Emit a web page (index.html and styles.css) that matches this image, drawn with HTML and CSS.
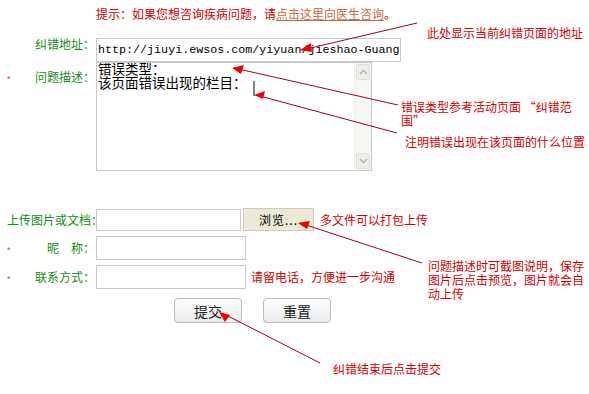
FILE: index.html
```html
<!DOCTYPE html>
<html lang="zh-CN">
<head>
<meta charset="utf-8">
<title>纠错</title>
<link rel="stylesheet" href="styles.css">
</head>
<body>
<div class="page">
  <p class="hint">提示：如果您想咨询疾病问题，请<a href="#" class="hint-link">点击这里向医生咨询</a>。</p>

  <form class="form">
    <div class="row row-url">
      <div class="label label-top1"><span class="star"></span><span class="label-text">纠错地址：</span></div>
      <input class="field field-url" type="text" value="http://jiuyi.ewsos.com/yiyuan/jieshao-Guang">
    </div>

    <div class="row row-desc">
      <div class="label label-top2"><span class="star">*</span><span class="label-text">问题描述：</span></div>
      <div class="textarea-box">
        <textarea class="textarea">错误类型：
该页面错误出现的栏目：</textarea>
        <div class="scrollbar">
          <div class="sb-btn"><svg width="9" height="6" viewBox="0 0 9 6"><path d="M1 5 L4.5 1.5 L8 5" fill="none" stroke="#b9b9b4" stroke-width="1.6"/></svg></div>
          <div class="sb-track"></div>
          <div class="sb-btn"><svg width="9" height="6" viewBox="0 0 9 6"><path d="M1 1 L4.5 4.5 L8 1" fill="none" stroke="#b9b9b4" stroke-width="1.6"/></svg></div>
        </div>
      </div>
    </div>

    <div class="row row-upload">
      <div class="label"><span class="star"></span><span class="label-text">上传图片或文档：</span></div>
      <input class="field field-file" type="text" value="">
      <button type="button" class="browse">浏览...</button>
      <span class="note note-upload">多文件可以打包上传</span>
    </div>

    <div class="row row-nick">
      <div class="label"><span class="star">*</span><span class="label-text">昵&emsp;称：</span></div>
      <input class="field field-short" type="text" value="">
    </div>

    <div class="row row-contact">
      <div class="label"><span class="star">*</span><span class="label-text">联系方式：</span></div>
      <input class="field field-short" type="text" value="">
      <span class="note note-contact">请留电话，方便进一步沟通</span>
    </div>

    <div class="actions">
      <button type="button" class="btn">提交</button>
      <button type="button" class="btn">重置</button>
    </div>
  </form>

  <svg class="overlay" width="589" height="394" viewBox="0 0 589 394">
    <line x1="254" y1="81" x2="254" y2="96" stroke="#000" stroke-width="1"/>
    <g stroke="#a3001e" stroke-width="1">
      <line x1="417" y1="23" x2="302" y2="50"/>
      <line x1="398" y1="105" x2="234" y2="68"/>
      <line x1="397" y1="133" x2="256" y2="95"/>
      <line x1="422" y1="263" x2="300" y2="223"/>
      <line x1="320" y1="363" x2="222" y2="313"/>
    </g>
    <g fill="#f00000">
      <polygon points="300,50 311,43 312,52"/>
      <polygon points="232,68 244,65 241,74"/>
      <polygon points="254,95 265,91 263,99"/>
      <polygon points="298,223 310,221 307,229"/>
      <polygon points="219,312 230,315 225,322"/>
    </g>
  </svg>

  <div class="ann ann-1">此处显示当前纠错页面的地址</div>
  <div class="ann ann-2">错误类型参考活动页面 “纠错范<br>围”</div>
  <div class="ann ann-3">注明错误出现在该页面的什么位置</div>
  <div class="ann ann-4">问题描述时可截图说明，保存<br>图片后点击预览，图片就会自<br>动上传</div>
  <div class="ann ann-5">纠错结束后点击提交</div>
</div>
</body>
</html>
```
FILE: styles.css
```css
* { box-sizing: border-box; }
html, body { margin: 0; padding: 0; background: #fff; }
body {
  font-family: "Noto Sans CJK SC", "DejaVu Sans", sans-serif;
  font-size: 12px;
  line-height: 12px;
  color: #000;
}
.page {
  position: relative;
  width: 589px;
  height: 394px;
  overflow: hidden;
}
.hint {
  margin: 0;
  padding: 8px 0 0 96px;
  line-height: 12px;
  color: #d40000;
}
.hint-link { color: #c86a40; text-decoration: underline; }

.form { margin-top: 18px; display: flex; flex-direction: column; }
.row { display: flex; align-items: center; }
.label {
  width: 96px;
  flex: none;
  display: flex;
  justify-content: space-between;
  align-items: center;
  color: #178a17;
  line-height: 12px;
}
.label-top1 { align-self: flex-start; padding-top: 0; }
.label-top2 { align-self: flex-start; padding-top: 9px; }
.star {
  width: 12px;
  padding-left: 7px;
  color: #d04a6e;
  font-family: "Liberation Sans", sans-serif;
  font-size: 9px;
  line-height: 12px;
  position: relative;
  top: 2px;
}
.label-text { white-space: nowrap; padding-right: 1px; }

.field {
  border: 1px solid #c9c9c9;
  background: #fff;
  margin: 0;
  padding: 0 2px;
  font-family: "Liberation Mono", monospace;
  outline: none;
}
.field-url {
  width: 305px;
  height: 24px;
  font-size: 11.7px;
  color: #000;
  padding: 0 1px;
}
.row-url { height: 24px; }
.textarea-box {
  width: 276px;
  height: 109px;
  border: 1px solid #c9c9c9;
  display: flex;
  background: #fff;
}
.textarea {
  flex: 1;
  border: 0;
  margin: 0;
  padding: 1px 1px;
  resize: none;
  outline: none;
  overflow: hidden;
  font-family: "Liberation Mono", "Noto Sans CJK SC", monospace;
  font-size: 13.5px;
  line-height: 14px;
  color: #000;
}
.scrollbar {
  width: 17px;
  flex: none;
  display: flex;
  flex-direction: column;
  background: #f7f7f3;
  border-left: 1px solid #eeeee8;
}
.sb-btn {
  height: 16px;
  margin: 1px 1px;
  border: 1px solid #e0dfd8;
  border-radius: 2px;
  background: #efeee8;
  display: flex;
  align-items: center;
  justify-content: center;
}
.sb-track { flex: 1; }

.row-upload { margin-top: 37px; height: 23px; }
.field-file { width: 145px; height: 22px; }
.browse {
  margin-left: 2px;
  width: 71px;
  height: 23px;
  border: 1px solid #cfccbd;
  background: #ece9d8;
  font-family: "Noto Sans CJK SC", sans-serif;
  font-size: 12px;
  padding: 0;
  color: #000;
  letter-spacing: 1px;
}
.note { color: #d40000; white-space: nowrap; }
.note-upload { margin-left: 6px; }
.row-nick { margin-top: 5px; }
.field-short { width: 150px; height: 24px; }
.row-contact { margin-top: 5px; }
.note-contact { margin-left: 5px; }

.actions {
  margin-top: 9px;
  padding-left: 174px;
  display: flex;
  gap: 21px;
}
.btn {
  width: 68px;
  height: 25px;
  border: 1px solid #bdbdbd;
  border-radius: 4px;
  background: linear-gradient(#fdfdfd, #ececec);
  font-family: "Noto Sans CJK SC", sans-serif;
  font-size: 14px;
  color: #222;
  padding: 0;
}

.overlay { position: absolute; left: 0; top: 0; pointer-events: none; }
.ann {
  position: absolute;
  color: #d40000;
  line-height: 14px;
  white-space: nowrap;
}
.ann-1 { left: 427px; top: 26px; }
.ann-2 { left: 401px; top: 100px; }
.ann-3 { left: 405px; top: 135px; }
.ann-4 { left: 428px; top: 259px; }
.ann-5 { left: 333px; top: 362px; }
```
